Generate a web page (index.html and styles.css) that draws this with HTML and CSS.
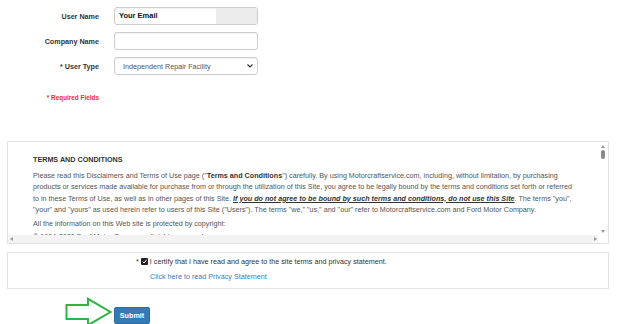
FILE: index.html
```html
<!DOCTYPE html>
<html lang="en">
<head>
      <meta charset="UTF-8">
      <meta name="viewport" content="width=device-width, initial-scale=1.0">
      <title>Register</title>
      <link rel="stylesheet" href="styles.css">
</head>
<body>
      <div class="form">
            <label class="lbl">User Name</label>
            <div class="field email">
                  <span class="email-text">Your Email</span>
                  <span class="email-addon"></span>
            </div>

            <label class="lbl">Company Name</label>
            <div class="field"></div>

            <label class="lbl">* User Type</label>
            <div class="field select">
                  <span>Independent Repair Facility</span>
                  <svg class="chev" width="6" height="4" viewBox="0 0 6 4"><path d="M0.5 0.5 L3 3 L5.5 0.5" fill="none" stroke="#333" stroke-width="1.2"/></svg>
            </div>
      </div>

      <div class="required">* Required Fields</div>

      <div class="terms">
            <div class="terms-body">
                  <h4>TERMS AND CONDITIONS</h4>
                  <p>Please read this Disclaimers and Terms of Use page ("<b>Terms and Conditions</b>") carefully. By using Motorcraftservice.com, including, without limitation, by purchasing products or services made available for purchase from or through the utilization of this Site, you agree to be legally bound by the terms and conditions set forth or referred to in these Terms of Use, as well as in other pages of this Site. <b class="warn">If you do not agree to be bound by such terms and conditions, do not use this Site</b>. The terms "you", "your" and "yours" as used herein refer to users of this Site ("Users"). The terms "we," "us," and "our" refer to Motorcraftservice.com and Ford Motor Company.</p>
                  <p>All the information on this Web site is protected by copyright:</p>
                  <p>© 1994-2020 Ford Motor Company all rights reserved.</p>
            </div>
            <div class="vbar">
                  <span class="arr up"></span>
                  <span class="thumb"></span>
                  <span class="arr down"></span>
            </div>
            <div class="hbar">
                  <span class="arr left"></span>
                  <span class="arr right"></span>
            </div>
            <div class="corner"></div>
      </div>

      <div class="certify">
            <div class="certify-line">
                  <span class="star">*</span>
                  <span class="check"><svg width="7" height="7" viewBox="0 0 7 7"><path d="M1.6 3.6 L3 5 L5.6 1.8" fill="none" stroke="#fff" stroke-width="1"/></svg></span>
                  <span>I certify that I have read and agree to the site terms and privacy statement.</span>
            </div>
            <a class="privacy" href="#">Click here to read Privacy Statement</a>
      </div>

      <div class="submit-row">
            <svg class="pointer" width="48" height="30" viewBox="0 0 48 30">
                  <path d="M1.5 8 H23 V1.8 L45.5 15 L23 28.2 V22 H1.5 Z" fill="none" stroke="#2eb345" stroke-width="2" stroke-linejoin="miter"/>
            </svg>
            <button class="submit">Submit</button>
      </div>
</body>
</html>
```

FILE: styles.css
```css
*{
      box-sizing: border-box;
      margin: 0;
      padding: 0;
}

body{
      font-family: "Liberation Sans", Arial, sans-serif;
      font-size: 7.2px;
      color: #333;
      background-color: #fff;
      padding-top: 7px;
}

.form{
      display: grid;
      grid-template-columns: 99px 144px;
      column-gap: 15px;
      row-gap: 7px;
      grid-auto-rows: 18px;
}

.lbl{
      font-weight: 700;
      text-align: right;
      align-self: center;
      color: #333;
}

.field{
      border: 1px solid #ccc;
      border-radius: 3px;
      background-color: #fff;
      box-shadow: inset 0 1px 1px rgba(0, 0, 0, 0.06);
}

.email{
      display: flex;
      overflow: hidden;
}

.email-text{
      flex: 1;
      font-weight: 700;
      font-size: 7.5px;
      color: #111;
      padding-left: 4px;
      line-height: 16px;
}

.email-addon{
      width: 41px;
      background-color: #ebebeb;
}

.select{
      display: flex;
      align-items: center;
      justify-content: space-between;
      padding: 0 4px 0 8px;
      color: #555;
}

.required{
      margin-top: 18px;
      width: 99px;
      text-align: right;
      font-size: 6.4px;
      font-weight: 700;
      color: #f22b2b;
      line-height: 10px;
}

.terms{
      margin: 38px 15px 0 7px;
      border: 1px solid #e2e2e2;
      height: 103px;
      display: grid;
      grid-template-columns: 1fr 10px;
      grid-template-rows: 1fr 8px;
}

.terms-body{
      overflow: hidden;
      padding: 12px 25px 0 25px;
      color: #555;
      line-height: 11.5px;
}

.terms-body h4{
      color: #333;
      font-size: 7.2px;
      margin-bottom: 4px;
}

.terms-body p{
      margin-bottom: 2px;
}

.terms-body b{
      color: #333;
}

.warn{
      font-style: italic;
      text-decoration: underline;
}

.vbar{
      display: flex;
      flex-direction: column;
      align-items: center;
      padding-top: 3px;
      background-color: #fff;
}

.thumb{
      width: 4px;
      height: 9px;
      border-radius: 2px;
      background-color: #8a8a8a;
      margin-top: 2px;
}

.arr{
      width: 0;
      height: 0;
      border: 2.5px solid transparent;
}

.up{
      border-top: none;
      border-bottom: 3px solid #999;
}

.down{
      margin-top: auto;
      margin-bottom: 2px;
      border-bottom: none;
      border-top: 3px solid #999;
}

.hbar{
      display: flex;
      align-items: center;
      justify-content: space-between;
      padding: 0 1px 0 2px;
      background-color: #f3f3f3;
}

.left{
      border-left: none;
      border-right: 3px solid #999;
}

.right{
      border-right: none;
      border-left: 3px solid #999;
}

.corner{
      background-color: #fff;
}

.certify{
      margin: 8px 15px 0 7px;
      border: 1px solid #e2e2e2;
      height: 37px;
      padding: 3px 0 0 128px;
      color: #333;
}

.certify-line{
      display: flex;
      align-items: center;
      height: 10px;
}

.star{
      margin-right: 2px;
}

.check{
      display: inline-flex;
      width: 7px;
      height: 7px;
      background-color: #222;
      border-radius: 1px;
      margin-right: 2px;
}

.privacy{
      display: block;
      margin: 6px 0 0 14px;
      color: #3b7dc1;
      text-decoration: none;
      line-height: 10px;
}

.submit-row{
      display: flex;
      align-items: flex-start;
      margin-top: 8px;
      padding-left: 65px;
      gap: 1px;
}

.submit{
      margin-top: 10px;
      width: 36px;
      height: 17px;
      border: 1px solid #2e6da4;
      border-radius: 2px;
      background-color: #337ab7;
      color: #fff;
      font-family: "Liberation Sans", Arial, sans-serif;
      font-weight: 700;
      font-size: 7.2px;
}
```
